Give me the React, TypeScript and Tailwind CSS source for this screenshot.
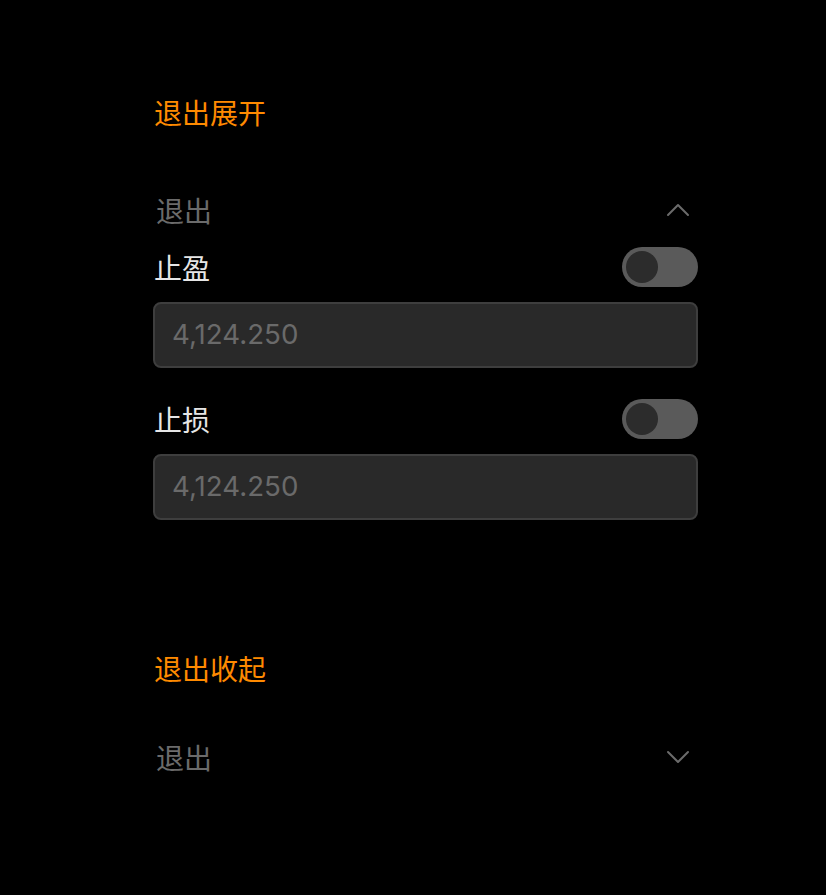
import React from "react";

const font = { fontFamily: '"Noto Sans CJK SC", "Noto Sans", sans-serif' };

function ChevronUp() {
  return (
    <svg width="24" height="14" viewBox="0 0 24 14" fill="none">
      <path d="M2 12 L12 2 L22 12" stroke="#6b6b6b" strokeWidth="2" strokeLinecap="round" strokeLinejoin="round" />
    </svg>
  );
}
function ChevronDown() {
  return (
    <svg width="24" height="14" viewBox="0 0 24 14" fill="none">
      <path d="M2 2 L12 12 L22 2" stroke="#6b6b6b" strokeWidth="2" strokeLinecap="round" strokeLinejoin="round" />
    </svg>
  );
}

function Toggle() {
  return (
    <div className="flex h-[40px] w-[76px] items-center rounded-full bg-[#5a5a5a] px-[4px]">
      <div className="h-[32px] w-[32px] rounded-full bg-[#2c2c2c]" />
    </div>
  );
}

function Field({ label }: { label: string }) {
  return (
    <div className="flex flex-col">
      <div className="flex h-[40px] items-center justify-between">
        <span className="text-[28px] leading-none text-[#e6e6e6]">{label}</span>
        <Toggle />
      </div>
      <div className="mt-[15px] ml-[-1px] flex h-[66px] items-center rounded-[8px] border-2 border-[#3e3e3e] bg-[#292929] pl-[17px]">
        <span
          className="text-[27.7px] text-[#6a6a6a]"
          style={{ fontFamily: 'Inter, "Liberation Sans", sans-serif' }}
        >
          4,124.250
        </span>
      </div>
    </div>
  );
}

export default function App() {
  return (
    <div className="min-h-[895px] w-full bg-black" style={font}>
      <div className="ml-[154px] flex w-[544px] flex-col pt-[96px]">
        <div className="h-[32px] text-[28px] leading-[32px] text-[#ff8a00]">退出展开</div>
        <div className="mt-[66px] flex h-[32px] items-center justify-between pl-[2px]">
          <span className="text-[28px] leading-none text-[#6b6b6b]">退出</span>
          <span className="mr-[8px]"><ChevronUp /></span>
        </div>
        <div className="mt-[21px]">
          <Field label="止盈" />
        </div>
        <div className="mt-[31px]">
          <Field label="止损" />
        </div>
        <div className="mt-[132px] h-[32px] text-[28px] leading-[32px] text-[#ff8a00]">退出收起</div>
        <div className="mt-[57px] flex h-[32px] items-center justify-between pl-[2px]">
          <span className="text-[28px] leading-none text-[#6b6b6b]">退出</span>
          <span className="mr-[8px]"><ChevronDown /></span>
        </div>
      </div>
    </div>
  );
}
